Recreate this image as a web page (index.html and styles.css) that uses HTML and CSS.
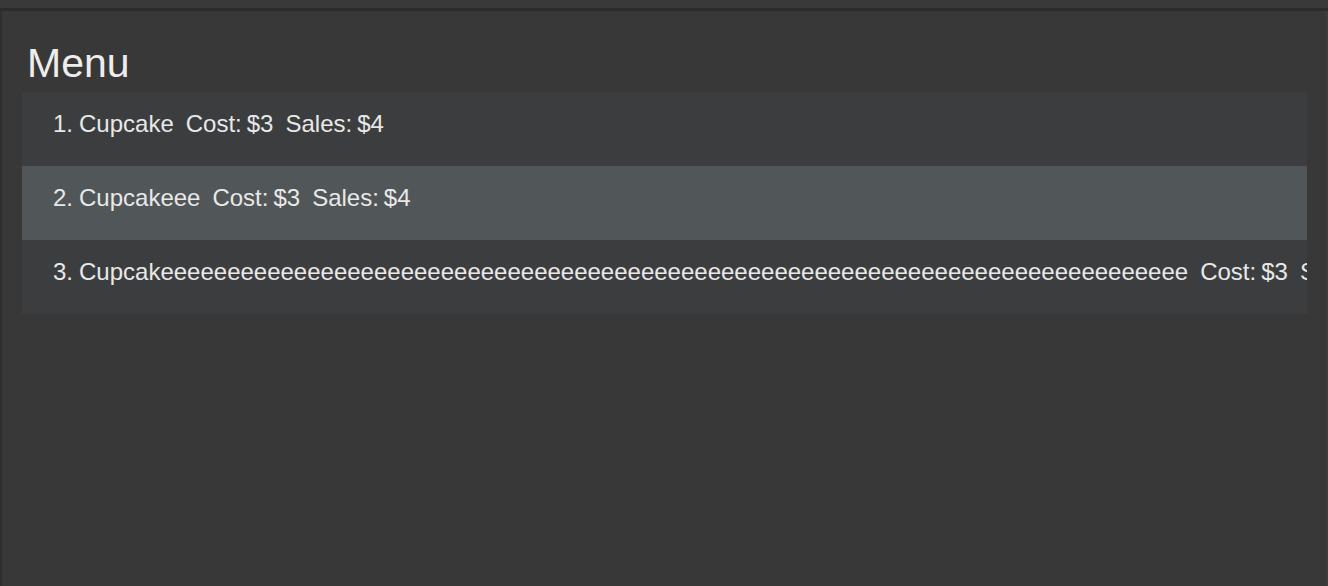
FILE: index.html
```html
<!DOCTYPE html>
<html>
<head>
<meta charset="utf-8">
<link rel="stylesheet" href="styles.css">
</head>
<body>
<div class="topbar"></div>
<div class="panel">
  <div class="title">Menu</div>
  <div class="list">
    <div class="row">
      <span class="idx">1.</span><span class="name">Cupcake</span>
      <span class="pair"><span>Cost:</span><span>$3</span></span>
      <span class="pair"><span>Sales:</span><span>$4</span></span>
    </div>
    <div class="row selected">
      <span class="idx">2.</span><span class="name">Cupcakeee</span>
      <span class="pair"><span>Cost:</span><span>$3</span></span>
      <span class="pair"><span>Sales:</span><span>$4</span></span>
    </div>
    <div class="row">
      <span class="idx">3.</span><span class="name">Cupcakeeeeeeeeeeeeeeeeeeeeeeeeeeeeeeeeeeeeeeeeeeeeeeeeeeeeeeeeeeeeeeeeeeeeeeeeeeeee</span>
      <span class="pair"><span>Cost:</span><span>$3</span></span>
      <span class="pair"><span>Sales:</span><span>$4</span></span>
    </div>
  </div>
</div>
</body>
</html>
```
FILE: styles.css
```css
html, body {
  margin: 0;
  padding: 0;
  height: 100%;
  background: #383838;
  overflow: hidden;
}
body {
  display: flex;
  flex-direction: column;
  font-family: "Liberation Sans", Arial, sans-serif;
  color: #e8e8e8;
}
.topbar {
  height: 8px;
  background: #393939;
  border-bottom: 3px solid #2b2b2b;
  flex: none;
}
.panel {
  flex: 1;
  display: flex;
  flex-direction: column;
  background: #383838;
  border-left: 2px solid #2e2e2e;
  border-right: 2px solid #3d3d3d;
  padding: 0 19px 0 20px;
}
.title {
  font-size: 41px;
  line-height: 46px;
  padding-top: 29px;
  padding-left: 5px;
  color: #ededed;
}
.list {
  margin-top: 6px;
  display: flex;
  flex-direction: column;
  overflow: hidden;
}
.row {
  height: 74px;
  box-sizing: border-box;
  padding: 18px 0 0 31px;
  background: #3c3d3f;
  display: flex;
  gap: 12px;
  font-size: 24px;
  line-height: 28px;
  white-space: nowrap;
  overflow: hidden;
}
.row.selected {
  background: #515658;
}
.idx {
  margin-right: -6px;
}
.pair {
  display: flex;
  gap: 5px;
}
```
